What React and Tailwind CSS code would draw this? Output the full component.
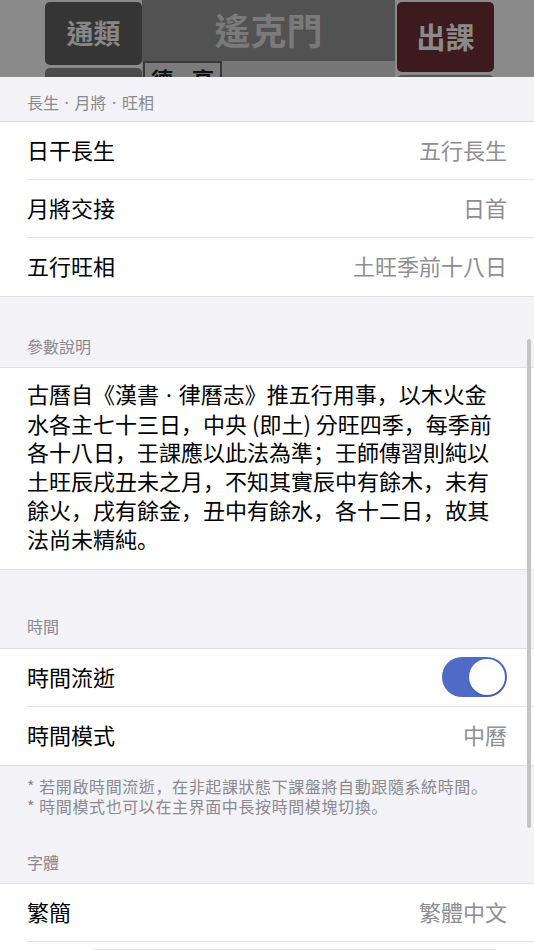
import React from "react";

function fmt(str) {
  const out = [];
  let buf = "";
  let k = 0;
  for (const ch of str) {
    if ("，；。".includes(ch)) {
      if (buf) out.push(buf);
      buf = "";
      out.push(
        <span key={k++} className="font-['Noto_Sans_CJK_SC',sans-serif]">
          {ch}
        </span>
      );
    } else if (ch === "·") {
      if (buf) out.push(buf);
      buf = "";
      out.push(
        <span key={k++} className="font-['Noto_Sans',sans-serif] px-[2px]">
          {ch}
        </span>
      );
    } else {
      buf += ch;
    }
  }
  if (buf) out.push(buf);
  return out;
}

function Row({ label, value, last, children }) {
  return (
    <div className="h-[58px] pl-[27px] flex">
      <div
        className={
          "flex-1 flex items-center justify-between pr-[27px] " +
          (last ? "" : "border-b border-[#e3e3e8]")
        }
      >
        <span className="text-[22px] leading-[30px] text-black pb-[4px]">{label}</span>
        {value ? (
          <span className="text-[22px] leading-[30px] text-[#8e8e93] pb-[4px]">{value}</span>
        ) : (
          children
        )}
      </div>
    </div>
  );
}

function Header({ children, h, pb }) {
  return (
    <div className={"flex items-end px-[27px] text-[16px] leading-[20px] text-[#8a8a8e] " + h + " " + pb}>
      <span className="whitespace-pre">{children}</span>
    </div>
  );
}

export default function App() {
  const para = [
    "古曆自《漢書 · 律曆志》推五行用事，以木火金",
    "水各主七十三日，中央 (即土) 分旺四季，每季前",
    "各十八日，壬課應以此法為準；壬師傳習則純以",
    "土旺辰戌丑未之月，不知其實辰中有餘木，未有",
    "餘火，戌有餘金，丑中有餘水，各十二日，故其",
    "法尚未精純。",
  ];
  return (
    <div className="w-[534px] h-[950px] overflow-hidden relative bg-[#f2f2f7] font-['Noto_Sans_CJK_TC','Noto_Sans_CJK_SC',sans-serif]">
      {/* dimmed app behind the sheet */}
      <div className="h-[77px] bg-[#8a8a8a] flex overflow-hidden">
        <div className="ml-[45px] w-[97px] flex flex-col gap-[3px] pt-[2px]">
          <div className="h-[63px] shrink-0 rounded-[5px] bg-[#353535] flex items-center justify-center text-[27px] font-bold text-[#878787]">
            通類
          </div>
          <div className="h-[20px] shrink-0 rounded-[5px] bg-[#4b4b4b]" />
        </div>
        <div className="w-[253px] flex flex-col">
          <div className="h-[61px] shrink-0 bg-[#525252] flex items-center justify-center pb-[4px] text-[36px] font-bold text-[#7a7a7a]">
            遙克門
          </div>
          <div className="flex-1 bg-[#777777] flex pl-[1px]">
            <div className="w-[79px] h-[30px] border-2 border-[#3a3a3a] bg-[#7b7b7b] flex justify-between px-[6px] pt-[2px] text-[22px] font-bold leading-[26px] text-[#111]">
              <span>德</span>
              <span>亯</span>
            </div>
          </div>
        </div>
        <div className="ml-[2px] w-[97px] flex flex-col gap-[3px] pt-[2px]">
          <div className="h-[70px] shrink-0 rounded-[5px] bg-[#3c1a1d] flex items-center justify-center text-[29px] font-bold text-[#8a8a8a]">
            出課
          </div>
          <div className="h-[20px] shrink-0 rounded-[5px] bg-[#555555]" />
        </div>
      </div>

      {/* sheet */}
      <Header h="h-[44px]" pb="pb-[8px]">{fmt("長生 · 月將 · 旺相")}</Header>
      <div className="bg-white border-y border-[#dedee3]">
        <Row label="日干長生" value="五行長生" />
        <Row label="月將交接" value="日首" />
        <Row label="五行旺相" value="土旺季前十八日" last />
      </div>

      <Header h="h-[70px]" pb="pb-[11px]">參數說明</Header>
      <div className="bg-white border-y border-[#dedee3] px-[27px] pt-[11px] pb-[17px] text-[22px] leading-[28.7px] text-black">
        {para.map((l, i) => (
          <div key={i} className="whitespace-pre">
            {fmt(l)}
          </div>
        ))}
      </div>

      <Header h="h-[78px]" pb="pb-[12px]">時間</Header>
      <div className="bg-white border-y border-[#dedee3]">
        <Row label="時間流逝">
          <div className="w-[65px] h-[40px] rounded-full bg-[#4f6bc6] relative mb-[2px]">
            <div className="absolute right-[2px] top-[2px] w-[36px] h-[36px] rounded-full bg-white shadow-[0_1px_2px_rgba(0,0,0,0.25)]" />
          </div>
        </Row>
        <Row label="時間模式" value="中曆" last />
      </div>
      <div className="px-[27px] pt-[10px] pb-[2px] text-[16px] leading-[20px] tracking-[0.6px] text-[#8a8a8e]">
        <div className="whitespace-pre">{fmt("* 若開啟時間流逝，在非起課狀態下課盤將自動跟隨系統時間。")}</div>
        <div className="whitespace-pre">{fmt("* 時間模式也可以在主界面中長按時間模塊切換。")}</div>
      </div>

      <Header h="h-[65px]" pb="pb-[11px]">字體</Header>
      <div className="bg-white border-t border-[#dedee3]">
        <Row label="繁簡" value="繁體中文" />
        <div className="pt-[7px] pl-[85px] pb-[20px]">
          <div className="w-[419px] h-[44px] rounded-[10px] bg-[#f4f4f6] border border-[#e4e4e8]" />
        </div>
      </div>

      {/* scroll indicator */}
      <div className="absolute right-[3px] top-[339px] h-[489px] w-[4px] rounded-full bg-[#c4c4c8]" />
    </div>
  );
}
